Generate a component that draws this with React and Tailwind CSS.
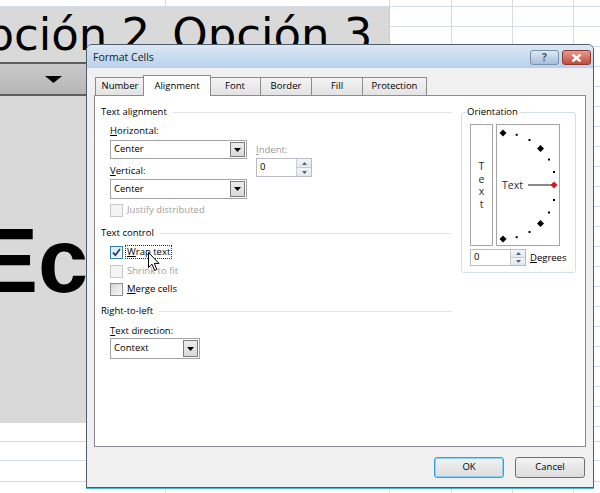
import React from "react";

const LINE = "border-[#d5dbe5]";
const W = {
  166: "w-[166px]",
  224: "w-[224px]",
  62: "w-[62px]",
  61: "w-[61px]",
};
const ALL = [166, 224, 62, 61, 61, 62];
const RIGHT = [62, 61, 61, 62];

function SheetRow({ widths, h }) {
  return (
    <div className={`flex shrink-0 border-b ${LINE} ${h}`}>
      {widths.map((w, i) => (
        <div key={i} className={`${W[w]} shrink-0 h-full border-r ${LINE}`} />
      ))}
    </div>
  );
}

function Caret() {
  return (
    <svg width="7" height="4" viewBox="0 0 7 4">
      <path d="M0 0 H7 L3.5 4 Z" fill="#000" />
    </svg>
  );
}

function Select({ value, className }) {
  return (
    <div className={`flex border border-[#a3a3a3] bg-white ${className}`}>
      <span className="flex-1 pl-[3px] flex items-center">{value}</span>
      <span className="w-[15px] m-[1px] border border-[#7d7d7d] bg-gradient-to-b from-[#ececec] to-[#d9d9d9] flex items-center justify-center">
        <Caret />
      </span>
    </div>
  );
}

function Spin({ value, className }) {
  return (
    <div className={`flex border border-[#b9bcc2] bg-white ${className}`}>
      <span className="flex-1 pl-[3px] flex items-center">{value}</span>
      <span className="w-[15px] flex flex-col border-l border-[#c9cdd2]">
        <span className="flex-1 flex items-center justify-center bg-gradient-to-b from-[#f4f6f8] to-[#e3e7ec] border-b border-[#c9cdd2]">
          <svg width="5" height="3" viewBox="0 0 5 3">
            <path d="M0 3 L2.5 0 L5 3 Z" fill="#4f6188" />
          </svg>
        </span>
        <span className="flex-1 flex items-center justify-center bg-gradient-to-b from-[#f4f6f8] to-[#e3e7ec]">
          <svg width="5" height="3" viewBox="0 0 5 3">
            <path d="M0 0 H5 L2.5 3 Z" fill="#4f6188" />
          </svg>
        </span>
      </span>
    </div>
  );
}

function Check({ checked, disabled, hover }) {
  const box = disabled
    ? "border-[#c9c9c9] bg-[#f4f4f4]"
    : hover
    ? "border-[#3c7fb1] bg-gradient-to-br from-[#d8ebfa] to-[#f4f9fd]"
    : "border-[#8e8f8f] bg-gradient-to-br from-[#d6d6d6] to-[#fafafa]";
  return (
    <span className={`w-[13px] h-[13px] shrink-0 border flex items-center justify-center ${box}`}>
      {checked && (
        <svg width="9" height="9" viewBox="0 0 9 9">
          <path d="M1 4.6 L3.4 7.2 L8 1" stroke="#22377a" strokeWidth="1.7" fill="none" />
        </svg>
      )}
    </span>
  );
}

// label with its access key underlined (first letter)
function Key({ children, className = "" }) {
  return <span className={`inline-block leading-none first-letter:underline ${className}`}>{children}</span>;
}

function Section({ title }) {
  return (
    <div className="h-[16px] flex items-center">
      <span className="leading-none">{title}</span>
      <span className="flex-1 ml-[6px] h-px bg-[#dfe3e8]" />
    </div>
  );
}

function CheckRow({ children, className, ...rest }) {
  return (
    <div className={`h-[16px] pl-[9px] flex items-center gap-[4px] ${className}`}>
      <Check {...rest} />
      {children}
    </div>
  );
}

function Dial() {
  const big = [
    [6, 8],
    [43.5, 23.5],
    [43.5, 98.5],
    [6, 114],
  ];
  const small = [
    [19.7, 9.8],
    [32.5, 15],
    [52, 34.5],
    [57, 47],
    [57, 75],
    [52, 87.5],
    [32.5, 107],
    [19.7, 112.2],
  ];
  return (
    <div className="relative w-[64px] h-[122px] border border-[#a5a5a5] flex items-center pl-[5px]">
      <svg className="absolute inset-0" width="62" height="120" viewBox="0 0 62 120">
        <line x1="31" y1="60" x2="56" y2="60" stroke="#8a8a8a" strokeWidth="2" />
        {big.map(([x, y], i) => (
          <path key={i} d={`M${x} ${y - 3.5} L${x + 3.5} ${y} L${x} ${y + 3.5} L${x - 3.5} ${y} Z`} fill="#000" />
        ))}
        {small.map(([x, y], i) => (
          <rect key={i} x={x - 1} y={y - 1} width="2" height="2" fill="#000" />
        ))}
        <path d="M57 56.5 L60.5 60 L57 63.5 L53.5 60 Z" fill="#e2141b" />
      </svg>
      <span className="relative text-[10.5px] leading-none text-[#1e2a3a]">Text</span>
    </div>
  );
}

function Tab({ label, className }) {
  return (
    <div
      className={`h-[18px] border border-b-0 border-[#898c95] bg-gradient-to-b from-[#f3f3f3] to-[#e3e3e3] flex items-center justify-center ${className}`}
    >
      {label}
    </div>
  );
}

function Cursor() {
  return (
    <svg className="absolute left-[148px] top-[252px]" width="13" height="20" viewBox="0 0 13 20">
      <path d="M0.5 0.5 L0.5 15.5 L4 12.2 L6.6 18.4 L8.8 17.5 L6.3 11.4 L11 11.4 Z" fill="#fff" stroke="#000" strokeWidth="1" />
    </svg>
  );
}

export default function App() {
  return (
    <div className="relative w-[600px] h-[493px] overflow-hidden bg-white font-['Open_Sans','Noto_Sans',sans-serif] text-[9.5px] text-black">
      {/* spreadsheet behind the dialog */}
      <div className="flex flex-col">
        <SheetRow widths={ALL} h="h-[7px]" />
        <div className="flex h-[416px] shrink-0">
          <div className="w-[390px] shrink-0 bg-[#d9d9d9] border-r border-[#c8ccd2] overflow-hidden flex flex-col">
            <div className="h-[55px] shrink-0 flex items-start whitespace-nowrap text-[45px] leading-none pt-[5px] font-['DejaVu_Sans',sans-serif]">
              <span className="-ml-[50px]">Opción 2</span>
              <span className="ml-[22px]">Opción 3</span>
            </div>
            <div className="h-[34px] shrink-0 border-y-2 border-[#5e5e5e] bg-gradient-to-b from-[#c9c9c9] to-[#b6b6b6] flex items-center pl-[45px]">
              <svg width="17" height="7" viewBox="0 0 17 7">
                <path d="M0 0 H17 L8.5 7 Z" fill="#000" />
              </svg>
            </div>
            <div className="mt-[120px] whitespace-nowrap text-[90px] font-bold leading-none -ml-[22px] font-['Liberation_Sans',Arial,sans-serif]">
              Ecuador
            </div>
          </div>
          <div className="flex flex-col">
            {Array.from({ length: 21 }).map((_, i) => (
              <SheetRow key={i} widths={RIGHT} h="h-[20px]" />
            ))}
          </div>
        </div>
        <SheetRow widths={ALL} h="h-[19px]" />
        <SheetRow widths={ALL} h="h-[19px]" />
        <SheetRow widths={ALL} h="h-[21px]" />
        <SheetRow widths={ALL} h="h-[20px]" />
      </div>

      {/* Format Cells dialog */}
      <div className="absolute left-[86px] top-[44px] w-[508px] h-[444px] border border-[#4f5b68] rounded-t-[6px] bg-[#f0f0f0] flex flex-col shadow-[0_1px_0_#4cb8d8]">
        <div className="h-[23px] shrink-0 rounded-t-[5px] bg-gradient-to-b from-[#dce8f5] to-[#b8d0ea] flex items-start pl-[6px] pr-[2px]">
          <span className="text-[10.5px] mt-[5px] text-[#1b1b1b]">Format Cells</span>
          <div className="ml-auto mt-[5px] flex gap-[3px]">
            <div className="w-[29px] h-[15px] rounded-[3px] border border-[#7890ab] bg-gradient-to-b from-[#dfe9f5] to-[#a7bfd9] flex items-center justify-center text-[10px] font-bold text-[#43536a]">
              ?
            </div>
            <div className="w-[29px] h-[15px] rounded-[3px] border border-[#8a3a33] bg-gradient-to-b from-[#e59a8e] to-[#c2493b] flex items-center justify-center">
              <svg width="11" height="8" viewBox="0 0 11 8">
                <path d="M1.5 0.5 L9.5 7.5 M9.5 0.5 L1.5 7.5" stroke="#fff" strokeWidth="2.4" />
              </svg>
            </div>
          </div>
        </div>

        <div className="px-[7px]">
          {/* tabs */}
          <div className="h-[27px] flex items-end pl-[1px]">
            <Tab label="Number" className="w-[50px]" />
            <div className="relative z-10 -ml-[2px] w-[68px] h-[21px] -mb-px border border-b-0 border-[#898c95] bg-white flex items-center justify-center">
              Alignment
            </div>
            <Tab label="Font" className="-ml-[2px] w-[52px]" />
            <Tab label="Border" className="-ml-px w-[52px]" />
            <Tab label="Fill" className="-ml-px w-[52px]" />
            <Tab label="Protection" className="-ml-px w-[65px]" />
          </div>

          {/* tab panel */}
          <div className="h-[352px] border border-[#898c95] bg-white flex pl-[6px] pt-[8px]">
            <div className="w-[351px] flex flex-col">
              <Section title="Text alignment" />
              <div className="flex pl-[9px] mt-[3px]">
                <div className="w-[137px] flex flex-col">
                  <div className="h-[15px] flex items-center">
                    <Key>Horizontal:</Key>
                  </div>
                  <Select value="Center" className="mt-[2px] h-[19px]" />
                  <div className="h-[15px] mt-[4px] flex items-center">
                    <Key>Vertical:</Key>
                  </div>
                  <Select value="Center" className="mt-[1px] h-[20px]" />
                </div>
                <div className="ml-[9px] flex flex-col">
                  <div className="h-[15px] mt-[19px] flex items-center text-[#9a9a9a]">
                    <Key>Indent:</Key>
                  </div>
                  <Spin value="0" className="mt-[1px] w-[56px] h-[19px]" />
                </div>
              </div>
              <CheckRow disabled className="mt-[3px] text-[#a0a0a0]">
                <span className="leading-none">Justify distributed</span>
              </CheckRow>

              <div className="mt-[7px]">
                <Section title="Text control" />
              </div>
              <CheckRow checked hover className="mt-[3px]">
                <span className="border border-dotted border-[#333] px-[1px] -ml-[2px] h-[14px] flex items-center">
                  <Key>Wrap text</Key>
                </span>
              </CheckRow>
              <CheckRow disabled className="mt-[3px] text-[#a0a0a0]">
                <span className="leading-none">Shrink to fit</span>
              </CheckRow>
              <CheckRow className="mt-[2px]">
                <Key>Merge cells</Key>
              </CheckRow>

              <div className="mt-[6px]">
                <Section title="Right-to-left" />
              </div>
              <div className="pl-[9px] flex flex-col">
                <div className="h-[14px] mt-[5px] flex items-center">
                  <Key>Text direction:</Key>
                </div>
                <Select value="Context" className="w-[90px] h-[21px]" />
              </div>
            </div>

            {/* orientation group */}
            <div className="relative ml-[9px] mt-[8px] w-[115px] h-[161px] border border-[#d5dfe5] rounded-[3px] pl-[8px] pt-[11px]">
              <span className="absolute -top-[6px] left-[4px] bg-white px-[1px] leading-none">Orientation</span>
              <div className="flex gap-[3px]">
                <div className="w-[23px] h-[122px] border border-[#a5a5a5] flex flex-col items-center justify-center text-[10.5px] leading-[12.5px] text-[#1e2a3a]">
                  <span>T</span>
                  <span>e</span>
                  <span>x</span>
                  <span>t</span>
                </div>
                <Dial />
              </div>
              <div className="mt-[3px] flex items-center gap-[4px]">
                <Spin value="0" className="w-[56px] h-[17px]" />
                <Key>Degrees</Key>
              </div>
            </div>
          </div>

          {/* buttons */}
          <div className="mt-[10px] flex justify-end gap-[11px] pr-[1px]">
            <div className="w-[70px] h-[21px] rounded-[3px] border border-[#3c9ddb] shadow-[inset_0_0_0_1px_#8fd0f5] bg-gradient-to-b from-[#f2f2f2] to-[#dcdcdc] flex items-center justify-center">
              OK
            </div>
            <div className="w-[70px] h-[21px] rounded-[3px] border border-[#707070] bg-gradient-to-b from-[#f2f2f2] to-[#dcdcdc] flex items-center justify-center">
              Cancel
            </div>
          </div>
        </div>
      </div>

      <Cursor />
    </div>
  );
}
